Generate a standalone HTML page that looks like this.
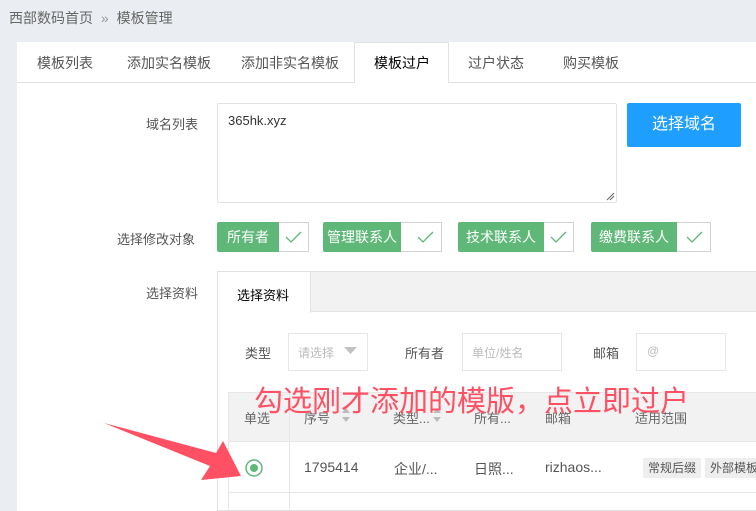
<!DOCTYPE html>
<html><head><meta charset="utf-8"><style>
*{margin:0;padding:0;box-sizing:border-box}
body{width:756px;height:511px;overflow:hidden;background:#eaedf1;font-family:"Liberation Sans","Noto Sans CJK SC",sans-serif;font-size:14px;color:#333;position:relative}
.a{position:absolute}
.t{white-space:nowrap}
</style></head><body>
<div class="a t" style="left:9px;top:8px;color:#666;font-size:14px">西部数码首页 <span style="color:#999;margin:0 4px">»</span> 模板管理</div>
<div class="a" style="left:17px;top:42px;width:739px;height:469px;background:#fff"></div>
<div class="a" style="left:17px;top:82px;width:739px;height:1px;background:#e2e2e2"></div>
<div class="a" style="left:354px;top:42px;width:95px;height:41px;background:#fff;border:1px solid #e2e2e2;border-bottom:none"></div>
<div class="a t" style="left:37px;top:53px;color:#555">模板列表</div>
<div class="a t" style="left:127px;top:53px;color:#555">添加实名模板</div>
<div class="a t" style="left:241px;top:53px;color:#555">添加非实名模板</div>
<div class="a t" style="left:374px;top:53px;color:#000">模板过户</div>
<div class="a t" style="left:468px;top:53px;color:#555">过户状态</div>
<div class="a t" style="left:563px;top:53px;color:#555">购买模板</div>

<div class="a t" style="left:146px;top:114px;color:#555;font-size:13px">域名列表</div>
<div class="a" style="left:217px;top:103px;width:400px;height:100px;border:1px solid #e2e2e2;border-radius:2px"></div>
<div class="a t" style="left:228px;top:113px;color:#333;font-size:13px">365hk.xyz</div>
<svg class="a" style="left:606px;top:192px" width="9" height="9"><path d="M1 8L8 1M4 8L8 4" stroke="#666" stroke-width="1"/></svg>
<div class="a t" style="left:627px;top:103px;width:114px;height:44px;background:#1e9fff;border-radius:2px;color:#fff;font-size:16px;text-align:center;line-height:44px">选择域名</div>

<div class="a t" style="left:117px;top:229px;color:#555;font-size:13px">选择修改对象</div>
<div class="a t" style="left:217px;top:222px;width:62px;height:30px;background:#5fb878;color:#fff;line-height:30px;text-align:center;border-radius:2px 0 0 2px">所有者</div>
<div class="a" style="left:279px;top:222px;width:30px;height:30px;border:1px solid #d2d2d2;border-left:none"></div>
<div class="a t" style="left:323px;top:222px;width:78px;height:30px;background:#5fb878;color:#fff;line-height:30px;text-align:center;border-radius:2px 0 0 2px">管理联系人</div>
<div class="a" style="left:401px;top:222px;width:41px;height:30px;border:1px solid #d2d2d2;border-left:none"></div>
<div class="a t" style="left:458px;top:222px;width:86px;height:30px;background:#5fb878;color:#fff;line-height:30px;text-align:center;border-radius:2px 0 0 2px">技术联系人</div>
<div class="a" style="left:544px;top:222px;width:30px;height:30px;border:1px solid #d2d2d2;border-left:none"></div>
<div class="a t" style="left:591px;top:222px;width:86px;height:30px;background:#5fb878;color:#fff;line-height:30px;text-align:center;border-radius:2px 0 0 2px">缴费联系人</div>
<div class="a" style="left:677px;top:222px;width:34px;height:30px;border:1px solid #d2d2d2;border-left:none"></div>
<svg class="a" style="left:0;top:0" width="756" height="260">
<g fill="none" stroke="#5fb878" stroke-width="1.3">
<path d="M286 237l5 5 10-10"/><path d="M418 237l5 5 10-10"/><path d="M551 237l5 5 10-10"/><path d="M687 237l5 5 10-10"/></g></svg>

<div class="a t" style="left:146px;top:283px;color:#555;font-size:13px">选择资料</div>
<div class="a" style="left:217px;top:271px;width:539px;height:240px;border:1px solid #e2e2e2;border-right:none"></div>
<div class="a" style="left:218px;top:272px;width:538px;height:40px;background:#f2f2f2;border-bottom:1px solid #e2e2e2"></div>
<div class="a" style="left:218px;top:272px;width:93px;height:41px;background:#fff;border-right:1px solid #e2e2e2"></div>
<div class="a t" style="left:237px;top:285px;color:#000;font-size:13px">选择资料</div>

<div class="a t" style="left:245px;top:343px;color:#555;font-size:13px">类型</div>
<div class="a" style="left:288px;top:333px;width:80px;height:38px;border:1px solid #e6e6e6"></div>
<div class="a t" style="left:298px;top:344px;color:#bbb;font-size:12px">请选择</div>
<svg class="a" style="left:344px;top:347px" width="14" height="8"><path d="M0 0h13L6.5 7z" fill="#c2c2c2"/></svg>
<div class="a t" style="left:405px;top:343px;color:#555;font-size:13px">所有者</div>
<div class="a" style="left:462px;top:333px;width:100px;height:38px;border:1px solid #e6e6e6"></div>
<div class="a t" style="left:472px;top:344px;color:#bbb;font-size:12px">单位/姓名</div>
<div class="a t" style="left:593px;top:343px;color:#555;font-size:13px">邮箱</div>
<div class="a" style="left:636px;top:333px;width:90px;height:38px;border:1px solid #e6e6e6"></div>
<div class="a t" style="left:647px;top:344px;color:#bbb;font-size:12px">@</div>

<div class="a" style="left:228px;top:392px;width:528px;height:50px;background:#f2f2f2;border:1px solid #e6e6e6;border-right:none"></div>
<div class="a" style="left:228px;top:442px;width:528px;height:51px;border-left:1px solid #e6e6e6;border-bottom:1px solid #e6e6e6"></div>
<div class="a" style="left:228px;top:493px;width:1px;height:18px;background:#e6e6e6"></div>
<div class="a" style="left:289px;top:392px;width:1px;height:119px;background:#e6e6e6"></div>
<div class="a t" style="left:244px;top:408px;color:#666;font-size:13px">单选</div>
<div class="a t" style="left:304px;top:408px;color:#666;font-size:13px">序号</div>
<div class="a t" style="left:393px;top:408px;color:#666;font-size:13px">类型...</div>
<div class="a t" style="left:474px;top:408px;color:#666;font-size:13px">所有...</div>
<div class="a t" style="left:545px;top:408px;color:#666;font-size:13px">邮箱</div>
<div class="a t" style="left:635px;top:408px;color:#666;font-size:13px">适用范围</div>
<svg class="a" style="left:0;top:0" width="756" height="511">
<path d="M342 413l4-5 4 5zM342 417l4 5 4-5z" fill="#bbb"/>
<path d="M433 413l4-5 4 5zM433 417l4 5 4-5z" fill="#bbb"/>
<circle cx="254" cy="468" r="8" fill="none" stroke="#5fb878" stroke-width="1.5"/>
<circle cx="254" cy="468" r="4" fill="#5fb878"/>
<path d="M104 423L210 466L201 480L241 476L223 441L216 453Z" fill="#ff5064"/>
</svg>
<div class="a t" style="left:304px;top:459px;color:#555;font-size:14px">1795414</div>
<div class="a t" style="left:394px;top:459px;color:#555;font-size:14px">企业/...</div>
<div class="a t" style="left:474px;top:459px;color:#555;font-size:14px">日照...</div>
<div class="a t" style="left:545px;top:459px;color:#555;font-size:14px">rizhaos...</div>
<div class="a t" style="left:643px;top:458px;background:#eee;color:#555;font-size:12px;padding:2px 5px;line-height:16px">常规后缀</div>
<div class="a t" style="left:705px;top:458px;background:#eee;color:#555;font-size:12px;padding:2px 5px;line-height:16px">外部模板</div>
<div class="a t" style="left:254px;top:378px;color:#ff5064;font-size:29px">勾选刚才添加的模版，点立即过户</div>
</body></html>
